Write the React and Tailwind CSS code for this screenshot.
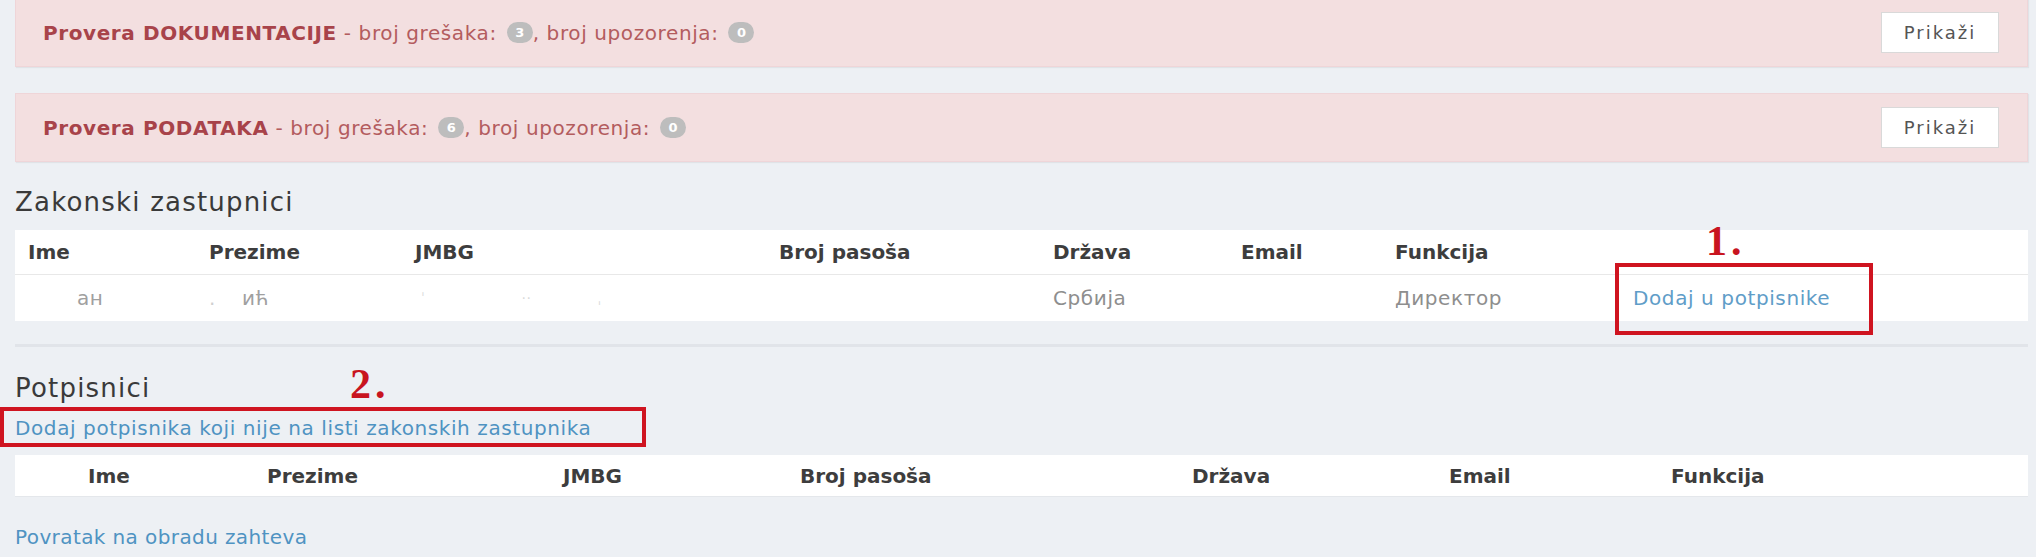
import React from "react";

const Badge = ({ children }) => (
  <span className="mx-[3px] inline-flex h-[21px] w-[26px] items-center justify-center rounded-full bg-[#bdbdbd] text-[13px] font-bold tracking-normal text-white">
    {children}
  </span>
);

const CheckAlert = ({ title, errors, warnings, className = "" }) => (
  <div
    className={`flex h-[69px] items-center justify-between border border-[#efd5d8] bg-[#f3dfe0] pl-[27px] pr-[28px] shadow-[1px_1px_1px_rgba(0,0,0,0.05)] ${className}`}
  >
    <p className="flex items-center text-[20px] tracking-[0.6px] text-[#b35c5e]">
      <span className="font-bold text-[#a8434a]">Provera {title}</span>
      <span className="whitespace-pre"> - broj grešaka: </span>
      <Badge>{errors}</Badge>
      <span className="-ml-[3px] whitespace-pre">, broj upozorenja: </span>
      <Badge>{warnings}</Badge>
    </p>
    <button className="h-[41px] w-[118px] border border-[#d9d9d9] bg-white text-[18px] tracking-[2px] text-[#555]">
      Prikaži
    </button>
  </div>
);

const RedLabel = ({ children, className = "" }) => (
  <span
    className={`absolute font-['Liberation_Serif',serif] text-[42px] font-bold leading-none tracking-[4px] text-[#c8141f] ${className}`}
  >
    {children}
  </span>
);

const cols = ["Ime", "Prezime", "JMBG", "Broj pasoša", "Država", "Email", "Funkcija"];

export default function App() {
  return (
    <div className="relative h-[557px] w-full overflow-hidden bg-[#edf0f4] pl-[15px] pr-[8px] font-['DejaVu_Sans',sans-serif] text-[#3a3a3a]">
      {/* provere */}
      <CheckAlert title="DOKUMENTACIJE" errors="3" warnings="0" className="-mt-[2px]" />
      <CheckAlert title="PODATAKA" errors="6" warnings="0" className="mt-[26px]" />

      {/* zakonski zastupnici */}
      <h2 className="mt-[24px] text-[26px] leading-[32px] tracking-[1.2px] text-[#3a3a3a]">
        Zakonski zastupnici
      </h2>
      <div className="mt-[12px] bg-white">
        <div className="grid h-[44px] grid-cols-[181px_206px_364px_274px_188px_154px_238px_1fr] items-center text-[20px] font-bold text-[#3d3d3d]">
          {cols.map((col) => (
            <div key={col} className="pl-[13px]">
              {col}
            </div>
          ))}
          <div className="relative h-full">
            <RedLabel className="left-[86px] -top-[10px]">1.</RedLabel>
          </div>
        </div>
        <div className="grid h-[47px] grid-cols-[181px_206px_364px_274px_188px_154px_238px_1fr] items-center border-t border-[#e8e8e8] text-[20px] tracking-[0.6px] text-[#8e8e8e]">
          <div className="pl-[62px] text-[#a0a0a0]">ан</div>
          <div className="pl-[13px] text-[#a0a0a0]">
            <span className="text-[#cfcfcf]">.</span>
            <span className="ml-[26px]">ић</span>
          </div>
          <div className="pl-[19px] text-[14px] text-[#dadada]">
            <span>ˈ</span>
            <span className="ml-[96px]">··</span>
            <span className="ml-[66px]">ˌ</span>
          </div>
          <div />
          <div className="pl-[13px]">Србија</div>
          <div />
          <div className="pl-[13px]">Директор</div>
          <div className="relative flex h-full items-center pl-[13px]">
            <a href="#" className="text-[#5f9dc8]">
              Dodaj u potpisnike
            </a>
            <div className="absolute -left-[5px] -top-[12px] h-[72px] w-[258px] border-[4px] border-[#cf1420]" />
          </div>
        </div>
      </div>
      <div className="mt-[23px] h-[3px] bg-[#e1e4e9]" />

      {/* potpisnici */}
      <h2 className="relative mt-[25px] text-[26px] leading-[32px] tracking-[1.2px] text-[#3a3a3a]">
        Potpisnici
        <RedLabel className="left-[335px] -top-[9px]">2.</RedLabel>
      </h2>
      <div className="relative mt-[10px] text-[20px] leading-[28px] tracking-[0.6px]">
        <a href="#" className="text-[#4f93c2]">
          Dodaj potpisnika koji nije na listi zakonskih zastupnika
        </a>
        <div className="absolute -left-[15px] -top-[7px] h-[40px] w-[646px] border-[4px] border-[#cf1420]" />
      </div>
      <div className="mt-[13px] grid h-[42px] grid-cols-[60px_179px_296px_237px_392px_257px_222px_1fr] items-center border-b border-[#e4e7eb] bg-white text-[20px] font-bold text-[#3d3d3d]">
        <div />
        {cols.map((col) => (
          <div key={col} className="pl-[13px]">
            {col}
          </div>
        ))}
      </div>

      <a href="#" className="mt-[26px] block text-[20px] leading-[28px] tracking-[0.4px] text-[#4f93c2]">
        Povratak na obradu zahteva
      </a>
    </div>
  );
}
